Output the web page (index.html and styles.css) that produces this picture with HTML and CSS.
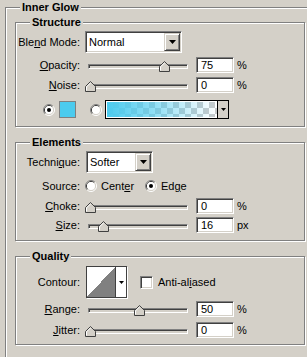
FILE: index.html
```html
<!DOCTYPE html>
<html lang="en">
<head>
    <meta charset="UTF-8">
    <meta name="viewport" content="width=device-width, initial-scale=1.0">
    <link rel="stylesheet" href="styles.css">
    <title>Inner Glow</title>
</head>
<body>
    <div class="panel">
        <span class="legend">Inner Glow</span>

        <div class="group structure">
            <span class="legend">Structure</span>
            <div class="row row-select">
                <span class="label">Ble<u>n</u>d Mode:</span>
                <div class="select select-blend">
                    <span class="select-text">Normal</span>
                    <span class="select-btn"><svg width="7" height="4"><polygon points="0,0 7,0 3.5,4" fill="#000"/></svg></span>
                </div>
            </div>
            <div class="row row-slider">
                <span class="label"><u>O</u>pacity:</span>
                <div class="slider">
                    <span class="thumb" style="left:70px"><svg width="11" height="11"><polygon points="0.5,10.5 0.5,5.5 5.5,0.5 10.5,5.5 10.5,10.5" fill="#d4d0c8" stroke="#404040"/><polyline points="1.5,9.5 1.5,5.9 5.5,1.9" fill="none" stroke="#fff"/></svg></span>
                </div>
                <div class="field">75</div>
                <span class="unit">%</span>
            </div>
            <div class="row row-slider">
                <span class="label"><u>N</u>oise:</span>
                <div class="slider">
                    <span class="thumb" style="left:-4px"><svg width="11" height="11"><polygon points="0.5,10.5 0.5,5.5 5.5,0.5 10.5,5.5 10.5,10.5" fill="#d4d0c8" stroke="#404040"/><polyline points="1.5,9.5 1.5,5.9 5.5,1.9" fill="none" stroke="#fff"/></svg></span>
                </div>
                <div class="field">0</div>
                <span class="unit">%</span>
            </div>
            <div class="row row-color">
                <svg class="radio" width="12" height="12"><path d="M2.11,9.89 A5.5,5.5 0 0 1 9.89,2.11" fill="none" stroke="#808080"/><path d="M9.89,2.11 A5.5,5.5 0 0 1 2.11,9.89" fill="none" stroke="#fff"/><path d="M2.82,9.18 A4.5,4.5 0 0 1 9.18,2.82" fill="none" stroke="#404040"/><path d="M9.18,2.82 A4.5,4.5 0 0 1 2.82,9.18" fill="none" stroke="#d4d0c8"/><circle cx="6" cy="6" r="4" fill="#fff"/><circle cx="6" cy="6" r="2" fill="#000"/></svg>
                <span class="swatch"></span>
                <svg class="radio radio-gap" width="12" height="12"><path d="M2.11,9.89 A5.5,5.5 0 0 1 9.89,2.11" fill="none" stroke="#808080"/><path d="M9.89,2.11 A5.5,5.5 0 0 1 2.11,9.89" fill="none" stroke="#fff"/><path d="M2.82,9.18 A4.5,4.5 0 0 1 9.18,2.82" fill="none" stroke="#404040"/><path d="M9.18,2.82 A4.5,4.5 0 0 1 2.82,9.18" fill="none" stroke="#d4d0c8"/><circle cx="6" cy="6" r="4" fill="#fff"/></svg>
                <div class="gradient">
                    <span class="gradient-fill"></span>
                    <span class="gradient-btn"><svg width="5" height="3"><polygon points="0,0 5,0 2.5,3" fill="#000"/></svg></span>
                </div>
            </div>
        </div>

        <div class="group elements">
            <span class="legend">Elements</span>
            <div class="row row-select">
                <span class="label">Techni<u>q</u>ue:</span>
                <div class="select select-tech">
                    <span class="select-text">Softer</span>
                    <span class="select-btn"><svg width="7" height="4"><polygon points="0,0 7,0 3.5,4" fill="#000"/></svg></span>
                </div>
            </div>
            <div class="row row-source">
                <span class="label">Source:</span>
                <span class="option option-first">
                    <svg class="radio" width="12" height="12"><path d="M2.11,9.89 A5.5,5.5 0 0 1 9.89,2.11" fill="none" stroke="#808080"/><path d="M9.89,2.11 A5.5,5.5 0 0 1 2.11,9.89" fill="none" stroke="#fff"/><path d="M2.82,9.18 A4.5,4.5 0 0 1 9.18,2.82" fill="none" stroke="#404040"/><path d="M9.18,2.82 A4.5,4.5 0 0 1 2.82,9.18" fill="none" stroke="#d4d0c8"/><circle cx="6" cy="6" r="4" fill="#fff"/></svg>
                    <span>Cent<u>e</u>r</span>
                </span>
                <span class="option">
                    <svg class="radio" width="12" height="12"><path d="M2.11,9.89 A5.5,5.5 0 0 1 9.89,2.11" fill="none" stroke="#808080"/><path d="M9.89,2.11 A5.5,5.5 0 0 1 2.11,9.89" fill="none" stroke="#fff"/><path d="M2.82,9.18 A4.5,4.5 0 0 1 9.18,2.82" fill="none" stroke="#404040"/><path d="M9.18,2.82 A4.5,4.5 0 0 1 2.82,9.18" fill="none" stroke="#d4d0c8"/><circle cx="6" cy="6" r="4" fill="#fff"/><circle cx="6" cy="6" r="2" fill="#000"/></svg>
                    <span>Ed<u>g</u>e</span>
                </span>
            </div>
            <div class="row row-slider">
                <span class="label"><u>C</u>hoke:</span>
                <div class="slider">
                    <span class="thumb" style="left:-4px"><svg width="11" height="11"><polygon points="0.5,10.5 0.5,5.5 5.5,0.5 10.5,5.5 10.5,10.5" fill="#d4d0c8" stroke="#404040"/><polyline points="1.5,9.5 1.5,5.9 5.5,1.9" fill="none" stroke="#fff"/></svg></span>
                </div>
                <div class="field">0</div>
                <span class="unit">%</span>
            </div>
            <div class="row row-slider row-tight">
                <span class="label"><u>S</u>ize:</span>
                <div class="slider">
                    <span class="thumb" style="left:9px"><svg width="11" height="11"><polygon points="0.5,10.5 0.5,5.5 5.5,0.5 10.5,5.5 10.5,10.5" fill="#d4d0c8" stroke="#404040"/><polyline points="1.5,9.5 1.5,5.9 5.5,1.9" fill="none" stroke="#fff"/></svg></span>
                </div>
                <div class="field">16</div>
                <span class="unit">px</span>
            </div>
        </div>

        <div class="group quality">
            <span class="legend">Quality</span>
            <div class="row row-contour">
                <span class="label">Contour:</span>
                <div class="contour">
                    <span class="contour-curve"></span>
                    <span class="contour-btn"><svg width="5" height="3"><polygon points="0,0 5,0 2.5,3" fill="#000"/></svg></span>
                </div>
                <span class="checkbox"></span>
                <span class="check-label">Anti-al<u>i</u>ased</span>
            </div>
            <div class="row row-slider row-tight">
                <span class="label"><u>R</u>ange:</span>
                <div class="slider">
                    <span class="thumb" style="left:45px"><svg width="11" height="11"><polygon points="0.5,10.5 0.5,5.5 5.5,0.5 10.5,5.5 10.5,10.5" fill="#d4d0c8" stroke="#404040"/><polyline points="1.5,9.5 1.5,5.9 5.5,1.9" fill="none" stroke="#fff"/></svg></span>
                </div>
                <div class="field">50</div>
                <span class="unit">%</span>
            </div>
            <div class="row row-slider row-loose">
                <span class="label"><u>J</u>itter:</span>
                <div class="slider">
                    <span class="thumb" style="left:-4px"><svg width="11" height="11"><polygon points="0.5,10.5 0.5,5.5 5.5,0.5 10.5,5.5 10.5,10.5" fill="#d4d0c8" stroke="#404040"/><polyline points="1.5,9.5 1.5,5.9 5.5,1.9" fill="none" stroke="#fff"/></svg></span>
                </div>
                <div class="field">0</div>
                <span class="unit">%</span>
            </div>
        </div>
    </div>
</body>
</html>
```

FILE: styles.css
```css
*{
    margin:0px;
    padding:0px;
    box-sizing:border-box;
}
body{
    width:307px;
    height:357px;
    overflow:hidden;
    background-color:#d4d0c8;
    font-family:"Liberation Sans", Arial, sans-serif;
    font-size:11px;
    color:#000;
}
u{
    text-decoration-thickness:1px;
    text-underline-offset:1px;
}
/* the outer box runs on past the right and bottom edge of the dialog crop */
.panel{
    position:relative;
    width:302px;
    height:350px;
    margin:7px 0px 0px 5px;
    padding:14px 0px 0px 9px;
    border-top:1px solid #808080;
    border-left:1px solid #808080;
    box-shadow:inset 1px 1px 0px #fff;
}
.legend{
    position:absolute;
    top:-7px;
    left:14px;
    padding:0px 2px;
    line-height:13px;
    font-weight:bold;
    background-color:#d4d0c8;
}
.group{
    position:relative;
    width:290px;
    border:1px solid #808080;
    box-shadow:inset 1px 1px 0px #fff, 1px 1px 0px #fff;
}
.structure{
    height:105px;
    padding-top:8px;
}
.elements{
    height:99px;
    margin-top:15px;
    padding-top:8px;
}
.quality{
    height:89px;
    margin-top:15px;
    padding-top:9px;
}
.row{
    display:flex;
    align-items:center;
}
.label{
    flex:none;
    width:64px;
    text-align:right;
}

/* drop-down lists */
.row-select{
    height:22px;
}
.select{
    display:flex;
    align-items:center;
    height:22px;
    padding:1px;
    background-color:#fff;
    border:1px solid;
    border-color:#808080 #fff #fff #808080;
    box-shadow:inset 1px 1px 0px #404040, inset -1px -1px 0px #d4d0c8;
}
.select-blend{
    width:97px;
    margin-left:5px;
}
.select-tech{
    width:67px;
    margin-left:6px;
}
.select-text{
    padding-left:2px;
}
.select-btn{
    display:flex;
    align-items:center;
    justify-content:center;
    width:16px;
    height:18px;
    margin-left:auto;
    background-color:#d4d0c8;
    border:1px solid;
    border-color:#d4d0c8 #404040 #404040 #d4d0c8;
    box-shadow:inset 1px 1px 0px #fff, inset -1px -1px 0px #808080;
}

/* sliders */
.row-slider{
    height:16px;
    margin-top:4px;
}
.row-tight{
    margin-top:3px;
}
.row-loose{
    margin-top:5px;
}
.slider{
    position:relative;
    flex:none;
    width:100px;
    height:5px;
    margin:3px 0px 0px 8px;
    background-color:#d4d0c8;
    border:1px solid;
    border-color:#808080 #fff #fff #808080;
    box-shadow:inset 1px 1px 0px #404040;
}
.thumb{
    position:absolute;
    bottom:-4px;
    width:11px;
    height:11px;
}
.thumb svg{
    display:block;
}
.field{
    flex:none;
    width:38px;
    height:16px;
    margin-left:8px;
    padding:1px 0px 0px 4px;
    line-height:13px;
    background-color:#fff;
    border:1px solid;
    border-color:#808080 #fff #fff #808080;
    box-shadow:inset 1px 1px 0px #404040, inset -1px -1px 0px #d4d0c8;
}
.unit{
    margin-left:3px;
}

/* colour choice */
.row-color{
    height:19px;
    margin-top:7px;
    padding-left:27px;
}
.radio{
    flex:none;
    display:block;
}
.swatch{
    width:17px;
    height:17px;
    margin-left:4px;
    border:1px solid #808080;
    background-color:#4ccbee;
}
.radio-gap{
    margin-left:14px;
}
.gradient{
    display:flex;
    width:124px;
    height:19px;
    margin-left:3px;
    padding:1px 0px 1px 1px;
    background-color:#fff;
    border:1px solid #000;
}
.gradient-fill{
    flex:1;
    background:linear-gradient(to right, #4ccbee 0%, rgba(76,203,238,0.6) 45%, rgba(76,203,238,0) 100%),
               repeating-conic-gradient(#c8cacb 0% 25%, #fff 0% 50%) 0px 0px / 12px 12px;
}
.gradient-btn{
    display:flex;
    align-items:center;
    justify-content:center;
    width:11px;
    margin-top:-1px;
    margin-bottom:-1px;
    border-left:1px solid #000;
    background-color:#d4d0c8;
}

/* source */
.row-source{
    height:16px;
    margin-top:5px;
}
.option{
    display:flex;
    align-items:center;
    gap:4px;
    margin-left:5px;
}
.option-first{
    width:55px;
}

/* contour */
.row-contour{
    height:32px;
}
.contour{
    display:flex;
    width:41px;
    height:32px;
    margin-left:6px;
    border:1px solid #404040;
    box-shadow:1px 1px 0px #fff;
}
.contour-curve{
    width:28px;
    background:linear-gradient(to top left, #808080 50%, #fff 50%);
}
.contour-btn{
    display:flex;
    align-items:center;
    justify-content:center;
    flex:1;
    border-left:1px solid #404040;
    background-color:#fff;
}
.checkbox{
    width:13px;
    height:13px;
    margin:0px 0px 0px 13px;
    background-color:#fff;
    border:1px solid;
    border-color:#808080 #fff #fff #808080;
    box-shadow:inset 1px 1px 0px #404040, inset -1px -1px 0px #d4d0c8;
}
.check-label{
    margin-left:5px;
}
```
